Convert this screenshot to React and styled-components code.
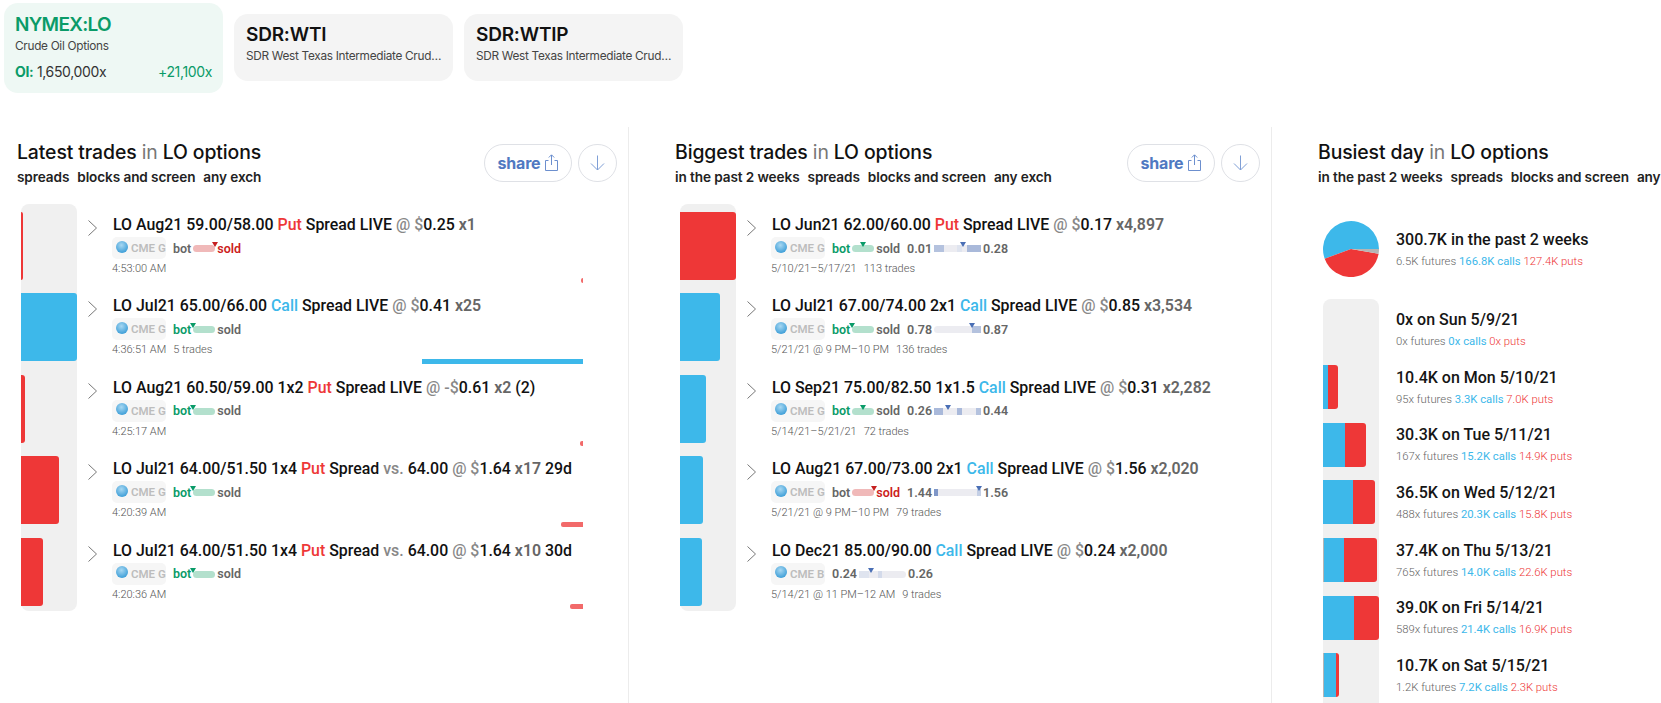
import React from 'react';
import styled, { createGlobalStyle } from 'styled-components';

const BLUE = '#3db8ea';
const RED = '#ee3737';
const GREEN = '#0a9b68';

const latestTrades = [
  { id: 1, bar: 2, color: RED, title: ['LO Aug21 59.00/58.00 ', 'Put', ' Spread LIVE'], prefix: '@ $', price: '0.25', qty: 'x1', side: 'sold', tri: 100, time: '4:53:00 AM', mark: { w: 2, color: '#f26a6a' } },
  { id: 2, bar: 56, color: BLUE, title: ['LO Jul21 65.00/66.00 ', 'Call', ' Spread LIVE'], prefix: '@ $', price: '0.41', qty: 'x25', side: 'bot', tri: 0, time: '4:36:51 AM', trades: '5 trades', mark: { w: 161, color: BLUE } },
  { id: 3, bar: 4, color: RED, title: ['LO Aug21 60.50/59.00 1x2 ', 'Put', ' Spread LIVE'], prefix: '@ -$', price: '0.61', qty: 'x2', tail: ' (2)', side: 'bot', tri: 0, time: '4:25:17 AM', mark: { w: 3, color: '#f26a6a' } },
  { id: 4, bar: 38, color: RED, title: ['LO Jul21 64.00/51.50 1x4 ', 'Put', ' Spread'], vs: '64.00', prefix: '@ $', price: '1.64', qty: 'x17', tail: ' 29d', side: 'bot', tri: 0, time: '4:20:39 AM', mark: { w: 22, color: '#f26a6a' } },
  { id: 5, bar: 22, color: RED, title: ['LO Jul21 64.00/51.50 1x4 ', 'Put', ' Spread'], vs: '64.00', prefix: '@ $', price: '1.64', qty: 'x10', tail: ' 30d', side: 'bot', tri: 0, time: '4:20:36 AM', mark: { w: 13, color: '#f26a6a' } },
];

const biggestTrades = [
  {
    id: 1, bar: 56, color: RED, title: ['LO Jun21 62.00/60.00 ', 'Put', ' Spread LIVE'], prefix: '@ $', price: '0.17', qty: 'x4,897', side: 'bot', tri: 50,
    time: '5/10/21–5/17/21', trades: '113 trades',
    range: { low: '0.01', high: '0.28', tri: 62, segs: [[0, 21, '#b4c2de'], [49, 60, '#dfe4ef'], [71, 100, '#a9b9da']] },
  },
  {
    id: 2, bar: 40, color: BLUE, title: ['LO Jul21 67.00/74.00 2x1 ', 'Call', ' Spread LIVE'], prefix: '@ $', price: '0.85', qty: 'x3,534', side: 'bot', tri: 0,
    time: '5/21/21 @ 9 PM–10 PM', trades: '136 trades',
    range: { low: '0.78', high: '0.87', tri: 81, segs: [[80, 100, '#b4c2de']] },
  },
  {
    id: 3, bar: 26, color: BLUE, title: ['LO Sep21 75.00/82.50 1x1.5 ', 'Call', ' Spread LIVE'], prefix: '@ $', price: '0.31', qty: 'x2,282', side: 'bot', tri: 50,
    time: '5/14/21–5/21/21', trades: '72 trades',
    range: { low: '0.26', high: '0.44', tri: 29, segs: [[0, 20, '#a9b9da'], [49, 60, '#a9b9da'], [89, 100, '#b4c2de']] },
  },
  {
    id: 4, bar: 23, color: BLUE, title: ['LO Aug21 67.00/73.00 2x1 ', 'Call', ' Spread LIVE'], prefix: '@ $', price: '1.56', qty: 'x2,020', side: 'sold', tri: 100,
    time: '5/21/21 @ 9 PM–10 PM', trades: '79 trades',
    range: { low: '1.44', high: '1.56', tri: 96, segs: [[0, 9, '#7f97c8'], [91, 100, '#c4cfe5']] },
  },
  {
    id: 5, bar: 22, color: BLUE, exch: 'CME B', title: ['LO Dec21 85.00/90.00 ', 'Call', ' Spread LIVE'], prefix: '@ $', price: '0.24', qty: 'x2,000',
    time: '5/14/21 @ 11 PM–12 AM', trades: '9 trades',
    range: { low: '0.24', high: '0.26', tri: 25, segs: [[0, 22, '#dfe4ef'], [40, 48, '#d3daea']] },
  },
];

const busiestDays = [
  { id: 1, title: '0x on Sun 5/9/21', futures: '0x', calls: '0x', puts: '0x', parts: [] },
  { id: 2, title: '10.4K on Mon 5/10/21', futures: '95x', calls: '3.3K', puts: '7.0K', parts: [[5, BLUE], [10, RED]] },
  { id: 3, title: '30.3K on Tue 5/11/21', futures: '167x', calls: '15.2K', puts: '14.9K', parts: [[22, BLUE], [21, RED]] },
  { id: 4, title: '36.5K on Wed 5/12/21', futures: '488x', calls: '20.3K', puts: '15.8K', parts: [[30, BLUE], [22, RED]] },
  { id: 5, title: '37.4K on Thu 5/13/21', futures: '765x', calls: '14.0K', puts: '22.6K', parts: [[1, '#b5b5b5'], [20, BLUE], [33, RED]] },
  { id: 6, title: '39.0K on Fri 5/14/21', futures: '589x', calls: '21.4K', puts: '16.9K', parts: [[31, BLUE], [25, RED]] },
  { id: 7, title: '10.7K on Sat 5/15/21', futures: '1.2K', calls: '7.2K', puts: '2.3K', parts: [[1, '#b5b5b5'], [12, BLUE], [3, RED]] },
];

const GlobalStyle = createGlobalStyle`
  html, body {
    margin: 0;
    height: 100%;
    overflow: hidden;
    background: #fff;
  }
  body {
    font-family: Inter, "Liberation Sans", sans-serif;
    color: #111;
  }
`;

const Page = styled.div`
  width: 1661px;
  height: 703px;
  overflow: hidden;
`;

const Tabs = styled.div`
  display: flex;
  align-items: flex-start;
  gap: 11px;
  box-sizing: border-box;
  height: 127px;
  padding-left: 4px;
`;

const Tab = styled.div`
  box-sizing: border-box;
  width: 219px;
  height: ${p => (p.$active ? '90px' : '67px')};
  margin-top: ${p => (p.$active ? '3px' : '14px')};
  padding: ${p => (p.$active ? '10px 11px 0 11px' : '9px 11px 0 12px')};
  border-radius: 14px;
  background: ${p => (p.$active ? '#eef8f4' : '#f4f4f4')};
`;

const TabTitle = styled.div`
  font-size: 19px;
  line-height: 24px;
  font-weight: 600;
  letter-spacing: ${p => (p.$active ? '-0.7px' : '-0.2px')};
  color: ${p => (p.$active ? GREEN : '#111')};
`;

const TabName = styled.div`
  margin-top: 1px;
  font-size: 11.8px;
  line-height: 16px;
  letter-spacing: -0.3px;
  color: #444;
  white-space: nowrap;
  overflow: hidden;
  text-overflow: ellipsis;
`;

const TabStats = styled.div`
  display: flex;
  justify-content: space-between;
  margin-top: 8px;
  font-size: 14px;
  line-height: 20px;
  letter-spacing: -0.35px;
  color: #333;
`;

const Label = styled.b`
  font-weight: 700;
  color: ${GREEN};
`;

const Change = styled.span`
  color: ${GREEN};
`;

const Columns = styled.div`
  display: flex;
  height: 576px;
`;

const Column = styled.section`
  box-sizing: border-box;
  flex: none;
  width: ${p => p.$width}px;
  padding: 12px ${p => p.$right}px 0 ${p => p.$left}px;
  border-right: ${p => (p.$last ? 'none' : '1px solid #ececec')};
`;

const Header = styled.header`
  display: flex;
  justify-content: space-between;
  align-items: center;
  height: 47px;
  margin-bottom: 18px;
  white-space: nowrap;
`;

const Title = styled.h2`
  margin: 0 0 3px;
  font-size: 19.4px;
  line-height: 26px;
  font-weight: 500;
  letter-spacing: -0.1px;
  color: #111;
`;

const Faint = styled.span`
  color: #777;
  font-weight: 400;
`;

const Filters = styled.div`
  display: flex;
  gap: 8px;
  font-size: 13.6px;
  line-height: 18px;
  font-weight: 600;
  letter-spacing: -0.1px;
  color: #222;
`;

const Actions = styled.div`
  display: flex;
  gap: 6px;
`;

const ShareButton = styled.button`
  display: flex;
  align-items: center;
  justify-content: center;
  gap: 5px;
  width: 88px;
  height: 38px;
  padding: 0;
  border: 1px solid #dfe1e6;
  border-radius: 19px;
  background: #fff;
  font-family: Inter, sans-serif;
  font-size: 16px;
  font-weight: 700;
  letter-spacing: -0.2px;
  color: #5079c2;
`;

const RoundButton = styled(ShareButton)`
  width: 39px;
`;

const List = styled.div`
  padding-left: ${p => p.$indent}px;
`;

const Row = styled.div`
  position: relative;
  display: grid;
  grid-template-columns: 56px 9px 1fr;
  height: 81.4px;
`;

const BarCell = styled.div`
  box-sizing: border-box;
  padding: 8px 0 5.4px;
  background: #f0f0f0;
  ${Row}:first-child & {
    border-top-left-radius: 8px;
    border-top-right-radius: 8px;
  }
  ${Row}:last-child & {
    border-bottom-left-radius: 8px;
    border-bottom-right-radius: 8px;
  }
`;

const Bar = styled.div`
  height: 100%;
  border-radius: 0 3px 3px 0;
  background: ${p => p.$color};
`;

const Chevron = styled.svg`
  grid-column: 2;
  width: 9px;
  height: 16px;
  margin: 16px 0 0 11px;
`;

const Body = styled.div`
  padding: 11px 0 0 27px;
  white-space: nowrap;
`;

const TradeTitle = styled.div`
  font-family: Roboto, sans-serif;
  font-size: 15.9px;
  line-height: 20px;
  font-weight: 500;
  color: #111;
`;

const Side = styled.span`
  color: ${p => (p.$kind === 'Put' ? RED : BLUE)};
`;

const Muted = styled.span`
  color: #888;
`;

const Qty = styled.span`
  font-weight: 600;
  color: #666;
`;

const Meta = styled.div`
  display: flex;
  align-items: center;
  height: 22px;
  margin: 2px 0 3px -1px;
  font-family: Roboto, sans-serif;
  font-size: 12.5px;
  font-weight: 600;
  color: #666;
`;

const Exchange = styled.span`
  display: flex;
  align-items: center;
  gap: 3px;
  box-sizing: border-box;
  width: 54px;
  height: 22px;
  margin-right: 7px;
  padding-left: 4px;
  border-radius: 5px;
  background: #f6f6f6;
  font-size: 11.5px;
  color: #bdbdbd;
`;

const Globe = styled.span`
  flex: none;
  width: 12px;
  height: 12px;
  margin-top: -3px;
  border-radius: 50%;
  background: radial-gradient(circle at 45% 35%, #a8d8f2, #3f9fd8 75%);
`;

const Pressure = styled.span`
  color: ${p => (p.$on ? (p.$red ? '#cc2020' : GREEN) : '#666')};
`;

const MiniBar = styled.span`
  position: relative;
  flex: none;
  width: ${p => p.$width}px;
  height: 7px;
  margin: 1px ${p => p.$gap}px 0;
  border-radius: 4px;
  overflow: visible;
  background: ${p => p.$color};
`;

const Segment = styled.i`
  position: absolute;
  top: 0;
  bottom: 0;
`;

const Pointer = styled.i`
  position: absolute;
  top: -3px;
  width: 0;
  height: 0;
  margin-left: -3px;
  border-left: 3px solid transparent;
  border-right: 3px solid transparent;
  border-top: 5px solid ${p => p.$color};
`;

const Low = styled.span`
  margin-left: ${p => (p.$spaced ? '7px' : '0')};
`;

const Time = styled.div`
  display: flex;
  gap: 7px;
  margin-left: -1px;
  font-family: Roboto, sans-serif;
  font-size: 11px;
  line-height: 14px;
  font-weight: 300;
  color: #555;
`;

const Mark = styled.div`
  position: absolute;
  right: 34px;
  bottom: 2.4px;
  height: 5px;
  border-radius: ${p => (p.$long ? '0' : '2px 0 0 2px')};
  background: ${p => p.$color};
`;

const Summary = styled.div`
  display: flex;
  align-items: center;
  gap: 17px;
  height: 56px;
  padding-top: 17px;
  margin-bottom: 22px;
`;

const DayTitle = styled.div`
  font-family: Roboto, sans-serif;
  font-size: 16px;
  line-height: 20px;
  font-weight: 500;
  color: #151515;
`;

const Breakdown = styled.div`
  margin-top: 5px;
  font-family: Roboto, sans-serif;
  font-size: 11.3px;
  line-height: 14px;
  font-weight: 300;
  color: #666;
  white-space: nowrap;
`;

const Calls = styled.span`
  color: ${BLUE};
  font-weight: 400;
`;

const Puts = styled.span`
  color: ${RED};
`;

const DayRow = styled.div`
  display: grid;
  grid-template-columns: 56px 1fr;
  column-gap: 17px;
  height: 57.7px;
`;

const DayCell = styled.div`
  display: flex;
  box-sizing: border-box;
  padding: 8.3px 0 5.4px;
  background: #f0f0f0;
  ${DayRow}:nth-child(2) & {
    border-radius: 8px 8px 0 0;
  }
`;

const DayPart = styled.div`
  width: ${p => p.$w}px;
  background: ${p => p.$color};
  &:last-child {
    border-radius: 0 3px 3px 0;
  }
`;

const DayText = styled.div`
  padding-top: 11px;
`;

const ChevronIcon = () => (
  <Chevron viewBox="0 0 9 16" fill="none" stroke="#777" strokeWidth="1">
    <path d="M0.5 0.5 L8.5 8 L0.5 15.5" />
  </Chevron>
);

const ShareIcon = () => (
  <svg width="13" height="17" viewBox="0 0 13 17" fill="none" stroke="#6c8fce" strokeWidth="1">
    <path d="M3.5 6.5 H0.5 V16.5 H12.5 V6.5 H9.5" />
    <path d="M6.5 11 V1 M3.8 3.5 L6.5 0.8 L9.2 3.5" />
  </svg>
);

const DownIcon = () => (
  <svg width="15" height="16" viewBox="0 0 15 16" fill="none" stroke="#7f9fd6" strokeWidth="1">
    <path d="M7.5 0.5 V15 M1 8.5 L7.5 15 L14 8.5" />
  </svg>
);

const PieChart = () => (
  <svg width="56" height="56" viewBox="0 0 56 56">
    <path d="M28 28 L56 28 A28 28 0 1 0 1.7 37.7 Z" fill={BLUE} />
    <path d="M28 28 L1.7 37.7 A28 28 0 0 0 55.6 32.7 Z" fill={RED} />
    <path d="M28 28 L55.6 32.7 A28 28 0 0 0 56 28 Z" fill="#b5b5b5" />
  </svg>
);

const SectionHeader = ({ title, filters, actions }) => (
  <Header>
    <div>
      <Title>{title} <Faint>in</Faint> LO options</Title>
      <Filters>
        {filters.map(f => <span key={f}>{f}</span>)}
      </Filters>
    </div>
    {actions && (
      <Actions>
        <ShareButton>share <ShareIcon /></ShareButton>
        <RoundButton aria-label="download"><DownIcon /></RoundButton>
      </Actions>
    )}
  </Header>
);

const TradeRow = ({ trade }) => {
  const { bar, color, title, vs, prefix, price, qty, tail, side, tri, time, trades, range, mark, exch } = trade;
  const sold = side === 'sold';
  return (
    <Row>
      <BarCell>
        <Bar $color={color} style={{ width: bar }} />
      </BarCell>
      <ChevronIcon />
      <Body>
        <TradeTitle>
          {title[0]}<Side $kind={title[1]}>{title[1]}</Side>{title[2]}
          {vs && <> <Muted>vs.</Muted> {vs}</>}
          {' '}<Muted>{prefix}</Muted>{price} <Qty>{qty}</Qty>{tail}
        </TradeTitle>
        <Meta>
          <Exchange><Globe />{exch || 'CME G'}</Exchange>
          {side && (
            <>
              <Pressure $on={!sold}>bot</Pressure>
              <MiniBar $width={22} $gap={2} $color={sold ? '#f0b9b9' : '#b3e0cd'}>
                <Pointer $color={sold ? '#c62020' : GREEN} style={{ left: `${tri}%` }} />
              </MiniBar>
              <Pressure $on={sold} $red>{sold ? 'sold' : ' sold'}</Pressure>
            </>
          )}
          {range && (
            <>
              <Low $spaced={!!side}>{range.low}</Low>
              <MiniBar $width={47} $gap={2} $color="#ececf1">
                {range.segs.map(([from, to, c]) => (
                  <Segment key={from} style={{ left: `${from}%`, width: `${to - from}%`, background: c }} />
                ))}
                <Pointer $color="#4a6fb5" style={{ left: `${range.tri}%` }} />
              </MiniBar>
              <span>{range.high}</span>
            </>
          )}
        </Meta>
        <Time>
          <span>{time}</span>
          {trades && <span>{trades}</span>}
        </Time>
      </Body>
      {mark && <Mark $color={mark.color} $long={mark.w > 100} style={{ width: mark.w }} />}
    </Row>
  );
};

const Counts = ({ futures, calls, puts }) => (
  <Breakdown>
    {futures} futures <Calls>{calls} calls</Calls> <Puts>{puts} puts</Puts>
  </Breakdown>
);

const App = () => (
  <Page>
    <GlobalStyle />
    <Tabs>
      <Tab $active>
        <TabTitle $active>NYMEX:LO</TabTitle>
        <TabName>Crude Oil Options</TabName>
        <TabStats>
          <span><Label>OI:</Label> 1,650,000x</span>
          <Change>+21,100x</Change>
        </TabStats>
      </Tab>
      <Tab>
        <TabTitle>SDR:WTI</TabTitle>
        <TabName>SDR West Texas Intermediate Crude Oil Swaps</TabName>
      </Tab>
      <Tab>
        <TabTitle>SDR:WTIP</TabTitle>
        <TabName>SDR West Texas Intermediate Crude Oil Swaps</TabName>
      </Tab>
    </Tabs>
    <Columns>
      <Column $width={629} $left={17} $right={11}>
        <SectionHeader title="Latest trades" filters={['spreads', 'blocks and screen', 'any exch']} actions />
        <List $indent={4}>
          {latestTrades.map(t => <TradeRow key={t.id} trade={t} />)}
        </List>
      </Column>
      <Column $width={643} $left={46} $right={11}>
        <SectionHeader title="Biggest trades" filters={['in the past 2 weeks', 'spreads', 'blocks and screen', 'any exch']} actions />
        <List $indent={5}>
          {biggestTrades.map(t => <TradeRow key={t.id} trade={t} />)}
        </List>
      </Column>
      <Column $width={389} $left={46} $right={0} $last>
        <SectionHeader title="Busiest day" filters={['in the past 2 weeks', 'spreads', 'blocks and screen', 'any exch']} />
        <List $indent={5}>
          <Summary>
            <PieChart />
            <div>
              <DayTitle>300.7K in the past 2 weeks</DayTitle>
              <Counts futures="6.5K" calls="166.8K" puts="127.4K" />
            </div>
          </Summary>
          {busiestDays.map(d => (
            <DayRow key={d.id}>
              <DayCell>
                {d.parts.map(([w, c], i) => <DayPart key={i} $w={w} $color={c} />)}
              </DayCell>
              <DayText>
                <DayTitle>{d.title}</DayTitle>
                <Counts futures={d.futures} calls={d.calls} puts={d.puts} />
              </DayText>
            </DayRow>
          ))}
        </List>
      </Column>
    </Columns>
  </Page>
);

export default App;
